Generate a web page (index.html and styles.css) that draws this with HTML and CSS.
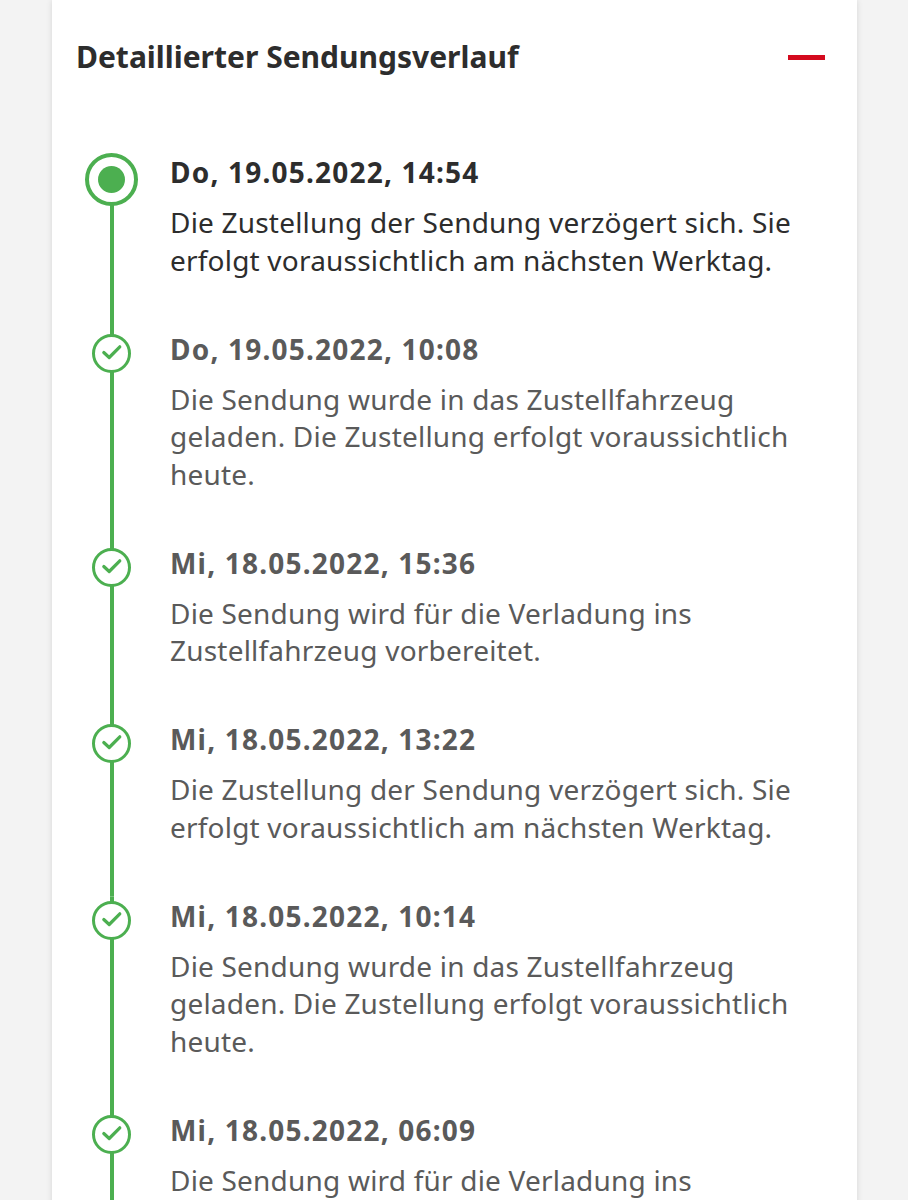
FILE: index.html
```html
<!DOCTYPE html>
<html lang="de">
<head>
<meta charset="utf-8">
<title>Sendungsverlauf</title>
<link rel="stylesheet" href="styles.css">
</head>
<body>
<main class="page">
  <section class="card">
    <header class="card-head">
      <h2 class="card-title">Detaillierter Sendungsverlauf</h2>
      <button class="toggle" aria-label="Einklappen"><span class="minus"></span></button>
    </header>

    <ol class="timeline">
      <li class="event current">
        <div class="marker">
          <span class="dot-outer"><span class="dot-inner"></span></span>
        </div>
        <div class="body">
          <div class="date">Do, 19.05.2022, 14:54</div>
          <p class="text">Die Zustellung der Sendung verzögert sich. Sie erfolgt voraussichtlich am nächsten Werktag.</p>
        </div>
      </li>
      <li class="event">
        <div class="marker">
          <span class="check"><svg viewBox="0 0 33 33" width="33" height="33"><path d="M8.8 15.5 L14.2 20.5 L24.8 9.8" fill="none" stroke="#4caf50" stroke-width="3.2" stroke-linecap="round" stroke-linejoin="round"/></svg></span>
        </div>
        <div class="body">
          <div class="date">Do, 19.05.2022, 10:08</div>
          <p class="text">Die Sendung wurde in das Zustellfahrzeug geladen. Die Zustellung erfolgt voraussichtlich heute.</p>
        </div>
      </li>
      <li class="event">
        <div class="marker">
          <span class="check"><svg viewBox="0 0 33 33" width="33" height="33"><path d="M8.8 15.5 L14.2 20.5 L24.8 9.8" fill="none" stroke="#4caf50" stroke-width="3.2" stroke-linecap="round" stroke-linejoin="round"/></svg></span>
        </div>
        <div class="body">
          <div class="date">Mi, 18.05.2022, 15:36</div>
          <p class="text">Die Sendung wird für die Verladung ins Zustellfahrzeug vorbereitet.</p>
        </div>
      </li>
      <li class="event">
        <div class="marker">
          <span class="check"><svg viewBox="0 0 33 33" width="33" height="33"><path d="M8.8 15.5 L14.2 20.5 L24.8 9.8" fill="none" stroke="#4caf50" stroke-width="3.2" stroke-linecap="round" stroke-linejoin="round"/></svg></span>
        </div>
        <div class="body">
          <div class="date">Mi, 18.05.2022, 13:22</div>
          <p class="text">Die Zustellung der Sendung verzögert sich. Sie erfolgt voraussichtlich am nächsten Werktag.</p>
        </div>
      </li>
      <li class="event">
        <div class="marker">
          <span class="check"><svg viewBox="0 0 33 33" width="33" height="33"><path d="M8.8 15.5 L14.2 20.5 L24.8 9.8" fill="none" stroke="#4caf50" stroke-width="3.2" stroke-linecap="round" stroke-linejoin="round"/></svg></span>
        </div>
        <div class="body">
          <div class="date">Mi, 18.05.2022, 10:14</div>
          <p class="text">Die Sendung wurde in das Zustellfahrzeug geladen. Die Zustellung erfolgt voraussichtlich heute.</p>
        </div>
      </li>
      <li class="event">
        <div class="marker">
          <span class="check"><svg viewBox="0 0 33 33" width="33" height="33"><path d="M8.8 15.5 L14.2 20.5 L24.8 9.8" fill="none" stroke="#4caf50" stroke-width="3.2" stroke-linecap="round" stroke-linejoin="round"/></svg></span>
        </div>
        <div class="body">
          <div class="date">Mi, 18.05.2022, 06:09</div>
          <p class="text">Die Sendung wird für die Verladung ins Zustellfahrzeug vorbereitet.</p>
        </div>
      </li>
    </ol>
  </section>
</main>
</body>
</html>
```

FILE: styles.css
```css
* { box-sizing: border-box; }

html, body {
  margin: 0;
  padding: 0;
  height: 1200px;
  overflow: hidden;
  background: #f3f3f3;
}

body {
  font-family: "Noto Sans", "Open Sans", sans-serif;
  color: #5a5a5a;
}

.page {
  padding-left: 52px;
}

.card {
  width: 805px;
  min-height: 1200px;
  background: #fff;
  box-shadow: 0 0 6px rgba(0, 0, 0, 0.12);
}

.card-head {
  display: flex;
  align-items: center;
  justify-content: space-between;
  padding: 34px 32px 0 24px;
  height: 80px;
}

.card-title {
  margin: 0;
  font-size: 30px;
  font-weight: 700;
  color: #2d2d2d;
  line-height: 40px;
}

.toggle {
  border: 0;
  background: none;
  padding: 0;
  width: 37px;
  height: 20px;
  display: flex;
  align-items: center;
}

.minus {
  display: block;
  width: 37px;
  height: 5px;
  background: #d40a1e;
}

.timeline {
  list-style: none;
  margin: 73px 0 0;
  padding: 0 0 0 33px;
}

.event {
  display: grid;
  grid-template-columns: 53px 1fr;
  column-gap: 32px;
}

.marker {
  display: flex;
  justify-content: center;
  align-items: flex-start;
  padding-top: 4px;
  background: linear-gradient(#4caf50, #4caf50) center / 4px 100% no-repeat;
}

.event.current .marker {
  padding-top: 0;
  background-position: center 26px;
}

.dot-outer {
  width: 53px;
  height: 53px;
  border-radius: 50%;
  border: 4px solid #4caf50;
  background: #fff;
  display: flex;
  align-items: center;
  justify-content: center;
}

.dot-inner {
  width: 27px;
  height: 27px;
  border-radius: 50%;
  background: #4caf50;
}

.check {
  width: 39px;
  height: 39px;
  border-radius: 50%;
  border: 3px solid #4caf50;
  background: #fff;
  display: flex;
  align-items: center;
  justify-content: center;
}

.check svg {
  display: block;
}

.body {
  padding: 0 50px 50.5px 0;
}

.date {
  font-size: 28px;
  font-weight: 700;
  letter-spacing: 1.2px;
  line-height: 38px;
  margin-bottom: 13px;
}

.text {
  margin: 0;
  font-size: 28px;
  letter-spacing: 0.2px;
  line-height: 37.5px;
}

.event.current .date,
.event.current .text {
  color: #2d2d2d;
}
```
